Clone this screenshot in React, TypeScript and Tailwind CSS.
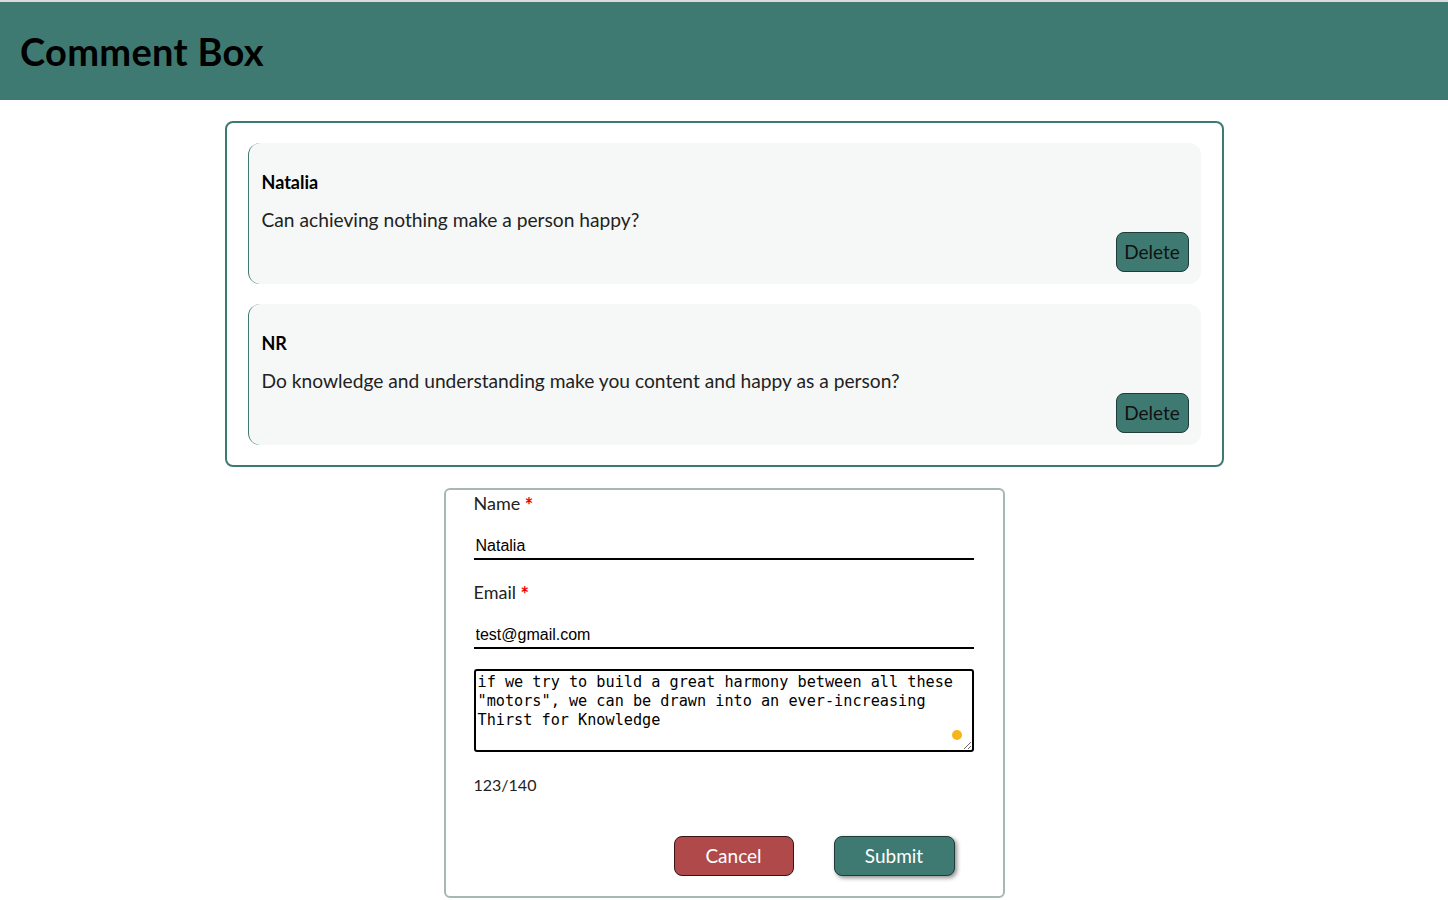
import { useState } from "react";

const comments = [
  { name: "Natalia", text: "Can achieving nothing make a person happy?" },
  { name: "NR", text: "Do knowledge and understanding make you content and happy as a person?" },
];

const body = { fontFamily: "Lato, 'Open Sans', sans-serif" };

export default function App() {
  const [message, setMessage] = useState(
    'if we try to build a great harmony between all these "motors", we can be drawn into an ever-increasing Thirst for Knowledge'
  );

  return (
    <div className="min-h-screen bg-white" style={body}>
      <header className="border-t-2 border-[#dcdcdc] bg-[#3e7a72] h-[100px] flex items-center px-5">
        <h1 className="text-[38px] font-bold text-black tracking-[0.3px]">Comment Box</h1>
      </header>

      <main className="flex flex-col items-center pt-[21px]">
        <section className="w-[999px] border-2 border-[#3e7a72] rounded-lg px-[21px] py-[20px] flex flex-col gap-[20px]">
          {comments.map((c, i) => (
            <div key={i} className="bg-[#f6f8f7] border-l border-[#3e7a72] rounded-xl h-[141px] pl-[13px] pr-[12px] pt-[27px] flex flex-col">
              <h3 className="font-bold text-[18px] leading-[24px] text-black">{c.name}</h3>
              <p className="text-[19.2px] leading-[24px] text-[#222] mt-[14px]">{c.text}</p>
              <div className="flex justify-end">
                <button className="bg-[#3e7a72] border border-[#1e3b37] rounded-lg w-[73px] h-[40px] text-[19px] text-[#111]">Delete</button>
              </div>
            </div>
          ))}
        </section>

        <form className="w-[561px] mt-[21px] border-2 border-[#a6b8b5] rounded-md pl-[28px] pr-[28px] pt-[1px] pb-[20px] flex flex-col">
          <label className="h-[24px] text-[18px] leading-[24px] text-[#222]">
            Name <span className="relative top-[3px] text-[#e00] text-[20px] font-bold leading-none">*</span>
          </label>
          <input
            defaultValue="Natalia"
            className="mt-[19px] w-[500px] h-[26px] border-b-2 border-black px-[2px] text-[16px] outline-none"
            style={{ fontFamily: "'Liberation Sans', Arial, sans-serif" }}
          />
          <label className="mt-[20px] h-[24px] text-[18px] leading-[24px] text-[#222]">
            Email <span className="relative top-[3px] text-[#e00] text-[20px] font-bold leading-none">*</span>
          </label>
          <input
            defaultValue="test@gmail.com"
            className="mt-[19px] w-[500px] h-[26px] border-b-2 border-black px-[2px] text-[16px] outline-none"
            style={{ fontFamily: "'Liberation Sans', Arial, sans-serif" }}
          />
          <div className="relative mt-[20px] w-[500px]">
            <textarea
              value={message}
              onChange={(e) => setMessage(e.target.value)}
              className="block w-[500px] h-[83px] border-2 border-black rounded-[3px] px-[2px] pt-[2px] pb-0 text-[15.2px] leading-[19px] text-black outline-none"
              style={{ fontFamily: "'DejaVu Sans Mono', 'Liberation Mono', monospace" }}
            />
            <span className="absolute right-[12px] bottom-[12px] w-[10px] h-[10px] rounded-full bg-[#f8b41b]" />
          </div>
          <p className="mt-[21px] text-[16px] leading-[24px] text-[#222]">{message.length}/140</p>
          <div className="flex gap-[40px] pl-[200px] mt-[39px]">
            <button type="button" className="bg-[#b04a4a] border border-[#3a1414] rounded-lg w-[120px] h-[40px] text-[19px] text-white">Cancel</button>
            <button type="button" className="bg-[#3e7a72] border border-[#1e3b37] rounded-lg w-[121px] h-[40px] text-[19px] text-white shadow-[2px_2px_4px_rgba(0,0,0,0.45)]">Submit</button>
          </div>
        </form>
      </main>
    </div>
  );
}
